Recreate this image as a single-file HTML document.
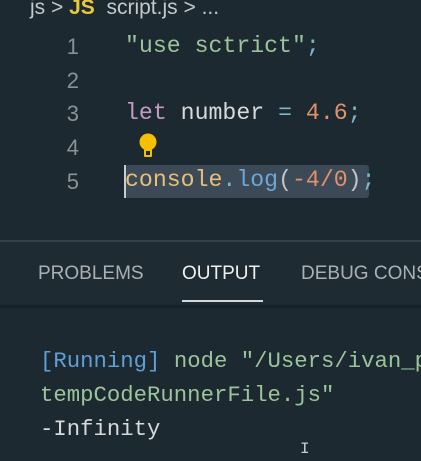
<!DOCTYPE html>
<html><head><style>
html,body{margin:0;padding:0;width:421px;height:461px;overflow:hidden;background:#1d2930;}
.wrap{position:relative;width:421px;height:461px;overflow:hidden;}
.a{position:absolute;white-space:pre;}
.m{font-family:"Liberation Mono","DejaVu Sans Mono",monospace;}
.s{font-family:"Liberation Sans",sans-serif;}
.ln{color:#8a9196;font-size:22px;font-family:"Liberation Sans",sans-serif;width:79px;text-align:right;left:0;}
.code{font-size:23.2px;left:125px;}
</style></head><body><div class="wrap">
<div class="a s" style="left:30px;top:-4px;font-size:21px;color:#c3c8cb;">js &gt; <b style="color:#e8c93a">JS</b>  script.js &gt; ...</div>
<div class="a ln" style="top:34px;">1</div>
<div class="a ln" style="top:68px;">2</div>
<div class="a ln" style="top:101px;">3</div>
<div class="a ln" style="top:135px;">4</div>
<div class="a ln" style="top:169px;">5</div>
<div class="a m code" style="top:33px;color:#9cc39a;">"use sctrict"<span style="color:#7bb7c4">;</span></div>
<div class="a m code" style="top:100px;color:#d7dadc;"><span style="color:#c39ac4">let</span> number <span style="color:#7bb7c4">=</span> <span style="color:#e0926a">4.6</span><span style="color:#7bb7c4">;</span></div>
<svg class="a" style="left:138px;top:133px" width="20" height="26" viewBox="0 0 20 26"><circle cx="10" cy="9" r="8.5" fill="#f6c000"/><rect x="6" y="14" width="8" height="10" rx="1" fill="#f6c000"/><rect x="8" y="18" width="4" height="4" fill="#1d2930"/></svg>
<div class="a" style="left:125px;top:165px;width:244px;height:33px;background:#3b4a56;border-radius:3px;"></div>
<div class="a" style="left:124px;top:165px;width:2px;height:33px;background:#c8cdd0;"></div>
<div class="a m code" style="top:167px;color:#e5c07b;">console<span style="color:#7bb7c4">.</span><span style="color:#6ca6d8">log</span><span style="color:#c0c4c8">(</span><span style="color:#e0926a">-4/0</span><span style="color:#c0c4c8">)</span><span style="color:#7bb7c4">;</span></div>
<div class="a" style="left:0;top:240px;width:421px;height:2px;background:#34414a;"></div>
<div class="a" style="left:0;top:242px;width:421px;height:64px;background:#1f2b33;"></div>
<div class="a" style="left:0;top:305px;width:421px;height:3px;background:#172127;"></div>
<div class="a s" style="left:38px;top:263px;font-size:19px;color:#aab1b5;">PROBLEMS</div>
<div class="a s" style="left:182px;top:263px;font-size:19px;color:#eef0f1;">OUTPUT</div>
<div class="a" style="left:182px;top:300px;width:81px;height:2px;background:#d6d9db;"></div>
<div class="a s" style="left:301px;top:263px;font-size:19px;color:#aab1b5;">DEBUG CONSOLE</div>
<div class="a m" style="left:40px;top:348px;font-size:22.3px;color:#9cc39a;"><span style="color:#5f9fd8">[Running]</span> node "/Users/ivan_p</div>
<div class="a m" style="left:40px;top:382px;font-size:22.3px;color:#9cc39a;">tempCodeRunnerFile.js"</div>
<div class="a m" style="left:40px;top:416px;font-size:22.3px;color:#d7dadc;">-Infinity</div>
<div class="a m" style="left:300px;top:440px;font-size:16px;color:#c8cdd0;">I</div>
</div></body></html>
